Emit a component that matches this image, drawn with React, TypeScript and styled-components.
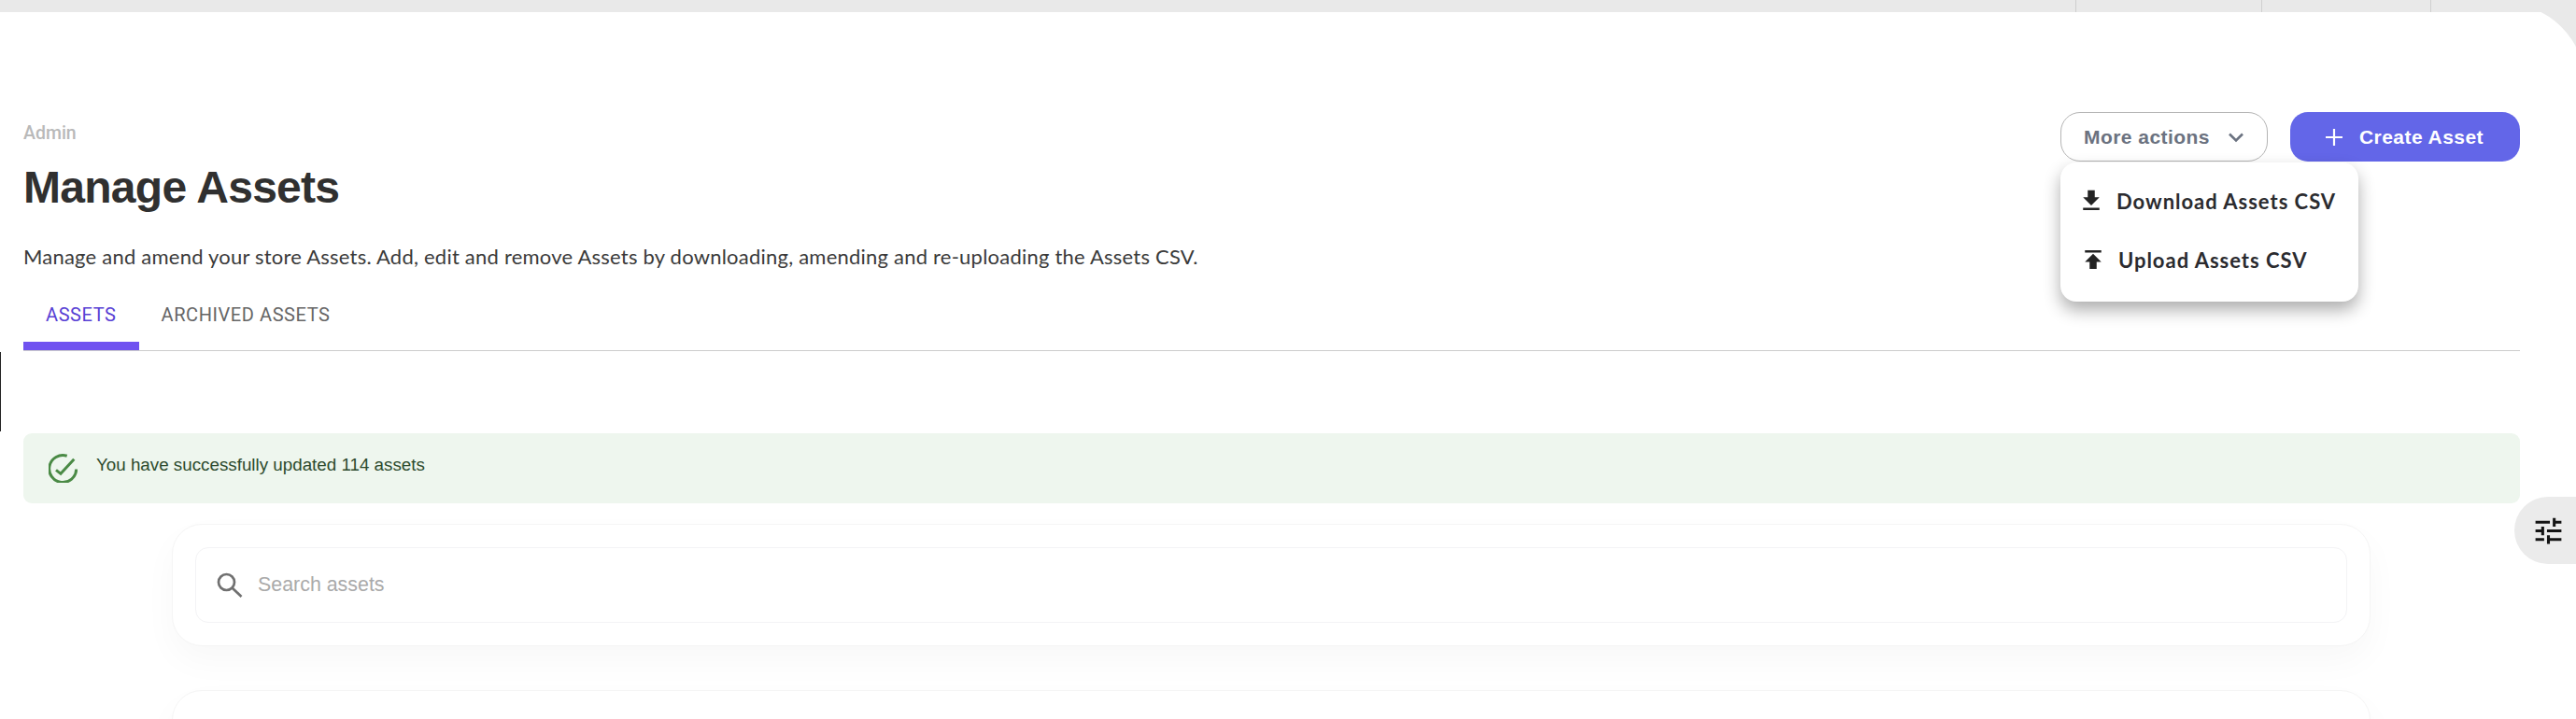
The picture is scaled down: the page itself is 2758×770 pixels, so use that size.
import React from "react";
import styled, { createGlobalStyle } from "styled-components";

const Global = createGlobalStyle`
  html, body { margin: 0; padding: 0; height: 770px; overflow: hidden; background: #e9e9e9; }
  * { box-sizing: border-box; }
`;

const Page = styled.div`
  position: relative;
  width: 2758px;
  height: 770px;
  overflow: hidden;
  background: #e9e9e9;
  font-family: "Liberation Sans", Arial, sans-serif;
`;

const TopBar = styled.div`
  position: relative;
  z-index: 1;
  display: flex;
  justify-content: flex-end;
  height: 13px;
  background: #e9e9e9;
`;

const TopCell = styled.div<{ $width: number }>`
  width: ${(p) => p.$width}px;
  border-left: 1px solid #cfcfcf;
`;

const Main = styled.main`
  position: relative;
  height: 767px;
  margin: -10px -10px 0 0;
  padding: 117px 70px 0 25px;
  background: #fff;
  border-top-right-radius: 88px;
`;

const StrayLine = styled.div`
  position: absolute;
  left: 0;
  top: 374px;
  width: 1px;
  height: 85px;
  background: #222;
`;

const Header = styled.header`
  display: flex;
  justify-content: space-between;
  align-items: flex-start;
  height: 141px;
`;

const TitleBlock = styled.div`
  padding-top: 13px;
`;

const Crumb = styled.div`
  font-family: Roboto, sans-serif;
  font-size: 19.5px;
  line-height: 20px;
  font-weight: 500;
  color: #b9b9b9;
`;

const Title = styled.h1`
  margin: 18px 0 0;
  font-size: 48px;
  line-height: 60px;
  font-weight: 700;
  letter-spacing: -0.72px;
  color: #303030;
`;

const Actions = styled.div`
  display: flex;
  gap: 24px;
`;

const MenuAnchor = styled.div`
  position: relative;
`;

const ActionButton = styled.button<{ $primary?: boolean }>`
  display: flex;
  align-items: center;
  height: 53px;
  margin: 0;
  font-family: "Liberation Sans", Arial, sans-serif;
  font-size: 21px;
  font-weight: 700;
  letter-spacing: 0.45px;
  cursor: pointer;
  color: ${(p) => (p.$primary ? "#fff" : "#6b7280")};
  background: ${(p) => (p.$primary ? "#6366e8" : "#fff")};
  border: ${(p) => (p.$primary ? "none" : "1px solid #b4b4b4")};
  border-radius: ${(p) => (p.$primary ? "19px" : "21px")};
  width: ${(p) => (p.$primary ? "246px" : "222px")};
  padding: ${(p) => (p.$primary ? "0 0 0 38px" : "0 0 0 24px")};
  gap: ${(p) => (p.$primary ? "18px" : "20px")};
`;

const Menu = styled.div`
  position: absolute;
  top: 54px;
  left: 0;
  width: 319px;
  height: 149px;
  background: #fff;
  border-radius: 17px;
  box-shadow: 0 9px 18px rgba(0, 0, 0, 0.32);
  padding: 21px 0 0;
  z-index: 3;
`;

const MenuItem = styled.div<{ $inset: number; $tracking: number }>`
  display: flex;
  align-items: center;
  gap: 12px;
  height: 40px;
  margin-bottom: 23px;
  padding-left: ${(p) => p.$inset}px;
  font-family: Lato, sans-serif;
  font-size: 22px;
  font-weight: 700;
  letter-spacing: ${(p) => p.$tracking}px;
  color: #2b2b2f;
  white-space: nowrap;
`;

const Description = styled.p`
  margin: 0;
  font-family: Lato, sans-serif;
  font-size: 22px;
  line-height: 28px;
  letter-spacing: 0.22px;
  color: #3a3a3a;
`;

const Tabs = styled.nav`
  display: flex;
  height: 77px;
  margin-top: 10px;
  border-bottom: 1px solid #cccccc;
`;

const Tab = styled.div<{ $active?: boolean }>`
  display: flex;
  align-items: flex-start;
  padding: 26px 24px 0;
  height: 76px;
  font-family: Roboto, sans-serif;
  font-size: 20px;
  line-height: 24px;
  letter-spacing: 0.58px;
  color: ${(p) => (p.$active ? "#5740d4" : "#666")};
  border-bottom: ${(p) => (p.$active ? "9px solid #7052f0" : "none")};
`;

const Alert = styled.div`
  display: flex;
  align-items: center;
  gap: 20px;
  height: 75px;
  margin-top: 88px;
  padding: 0 0 0 27px;
  border-radius: 9px;
  background: #eef6ee;
  font-size: 18.8px;
  color: #2c4a2d;
`;

const AlertText = styled.span`
  position: relative;
  top: -4px;
`;

const Cards = styled.section`
  display: flex;
  flex-direction: column;
  gap: 47px;
  margin-top: 22px;
  padding: 0 160px 0 159px;
`;

const Card = styled.div`
  min-height: 130px;
  padding: 24px;
  background: #fff;
  border: 1px solid #f5f5f5;
  border-radius: 32px;
  box-shadow: 0 16px 36px rgba(0, 0, 0, 0.03);
`;

const SearchBox = styled.div`
  display: flex;
  align-items: center;
  gap: 16px;
  height: 81px;
  padding: 0 0 0 22px;
  border: 1px solid #f3f3f5;
  border-radius: 14px;
  font-size: 21.4px;
  color: #aaa;
`;

const SideTab = styled.div`
  position: absolute;
  right: 10px;
  top: 529px;
  display: flex;
  align-items: center;
  justify-content: center;
  width: 66px;
  height: 72px;
  padding-left: 6px;
  background: #ebebeb;
  border-radius: 36px 0 0 36px;
`;

const Glyph = styled.svg<{ $size: number; $color: string }>`
  display: block;
  flex: none;
  width: ${(p) => p.$size}px;
  height: ${(p) => p.$size}px;
  fill: ${(p) => p.$color};
`;

const Stroke = styled.svg<{ $size: number; $color: string; $weight: number }>`
  display: block;
  flex: none;
  width: ${(p) => p.$size}px;
  height: ${(p) => p.$size}px;
  fill: none;
  stroke: ${(p) => p.$color};
  stroke-width: ${(p) => p.$weight};
`;

export default function App() {
  return (
    <Page>
      <Global />
      <TopBar>
        <TopCell $width={199} />
        <TopCell $width={181} />
        <TopCell $width={156} />
      </TopBar>
      <Main>
        <StrayLine />
        <Header>
          <TitleBlock>
            <Crumb>Admin</Crumb>
            <Title>Manage Assets</Title>
          </TitleBlock>
          <Actions>
            <MenuAnchor>
              <ActionButton>
                More actions
                <Stroke $size={16} $color="#6b7280" $weight={2.6} viewBox="0 0 16 16">
                  <path d="M1 4.5 8 11.5 15 4.5" />
                </Stroke>
              </ActionButton>
              <Menu>
                <MenuItem $inset={18} $tracking={0.98}>
                  <Glyph $size={30} $color="#232323" viewBox="0 0 24 24">
                    <path d="M19 9h-4V3H9v6H5l7 7 7-7zM5 18v2h14v-2H5z" />
                  </Glyph>
                  Download Assets CSV
                </MenuItem>
                <MenuItem $inset={20} $tracking={0.98}>
                  <Glyph $size={30} $color="#232323" viewBox="0 0 24 24">
                    <path d="M5 4v2h14V4H5zm0 10h4v6h6v-6h4l-7-7-7 7z" />
                  </Glyph>
                  Upload Assets CSV
                </MenuItem>
              </Menu>
            </MenuAnchor>
            <ActionButton $primary>
              <Stroke $size={18} $color="#fff" $weight={2.2} viewBox="0 0 18 18">
                <path d="M9 0v18M0 9h18" />
              </Stroke>
              Create Asset
            </ActionButton>
          </Actions>
        </Header>
        <Description>
          Manage and amend your store Assets. Add, edit and remove Assets by downloading, amending and re-uploading the Assets CSV.
        </Description>
        <Tabs>
          <Tab $active>ASSETS</Tab>
          <Tab>ARCHIVED ASSETS</Tab>
        </Tabs>
        <Alert>
          <Stroke $size={31} $color="#4a8a45" $weight={3} viewBox="0 0 31 31">
            <path d="M19.7 2.3A14.5 14.5 0 1 0 29.7 16.5" />
            <path d="M8 17.3 13 21.3 27.3 5.7" />
          </Stroke>
          <AlertText>You have successfully updated 114 assets</AlertText>
        </Alert>
        <Cards>
          <Card>
            <SearchBox>
              <Stroke $size={28} $color="#707070" $weight={2.7} viewBox="0 0 28 28">
                <circle cx="10.5" cy="10.5" r="8.5" />
                <path d="M16.5 16.5 26.5 26" />
              </Stroke>
              Search assets
            </SearchBox>
          </Card>
          <Card />
        </Cards>
        <SideTab>
          <Glyph $size={37} $color="#141414" viewBox="0 0 24 24">
            <path d="M3 17v2h6v-2H3zM3 5v2h10V5H3zm10 16v-2h8v-2h-8v-2h-2v6h2zM7 9v2H3v2h4v2h2V9H7zm14 4v-2H11v2h10zm-6-4h2V7h4V5h-4V3h-2v6z" />
          </Glyph>
        </SideTab>
      </Main>
    </Page>
  );
}
